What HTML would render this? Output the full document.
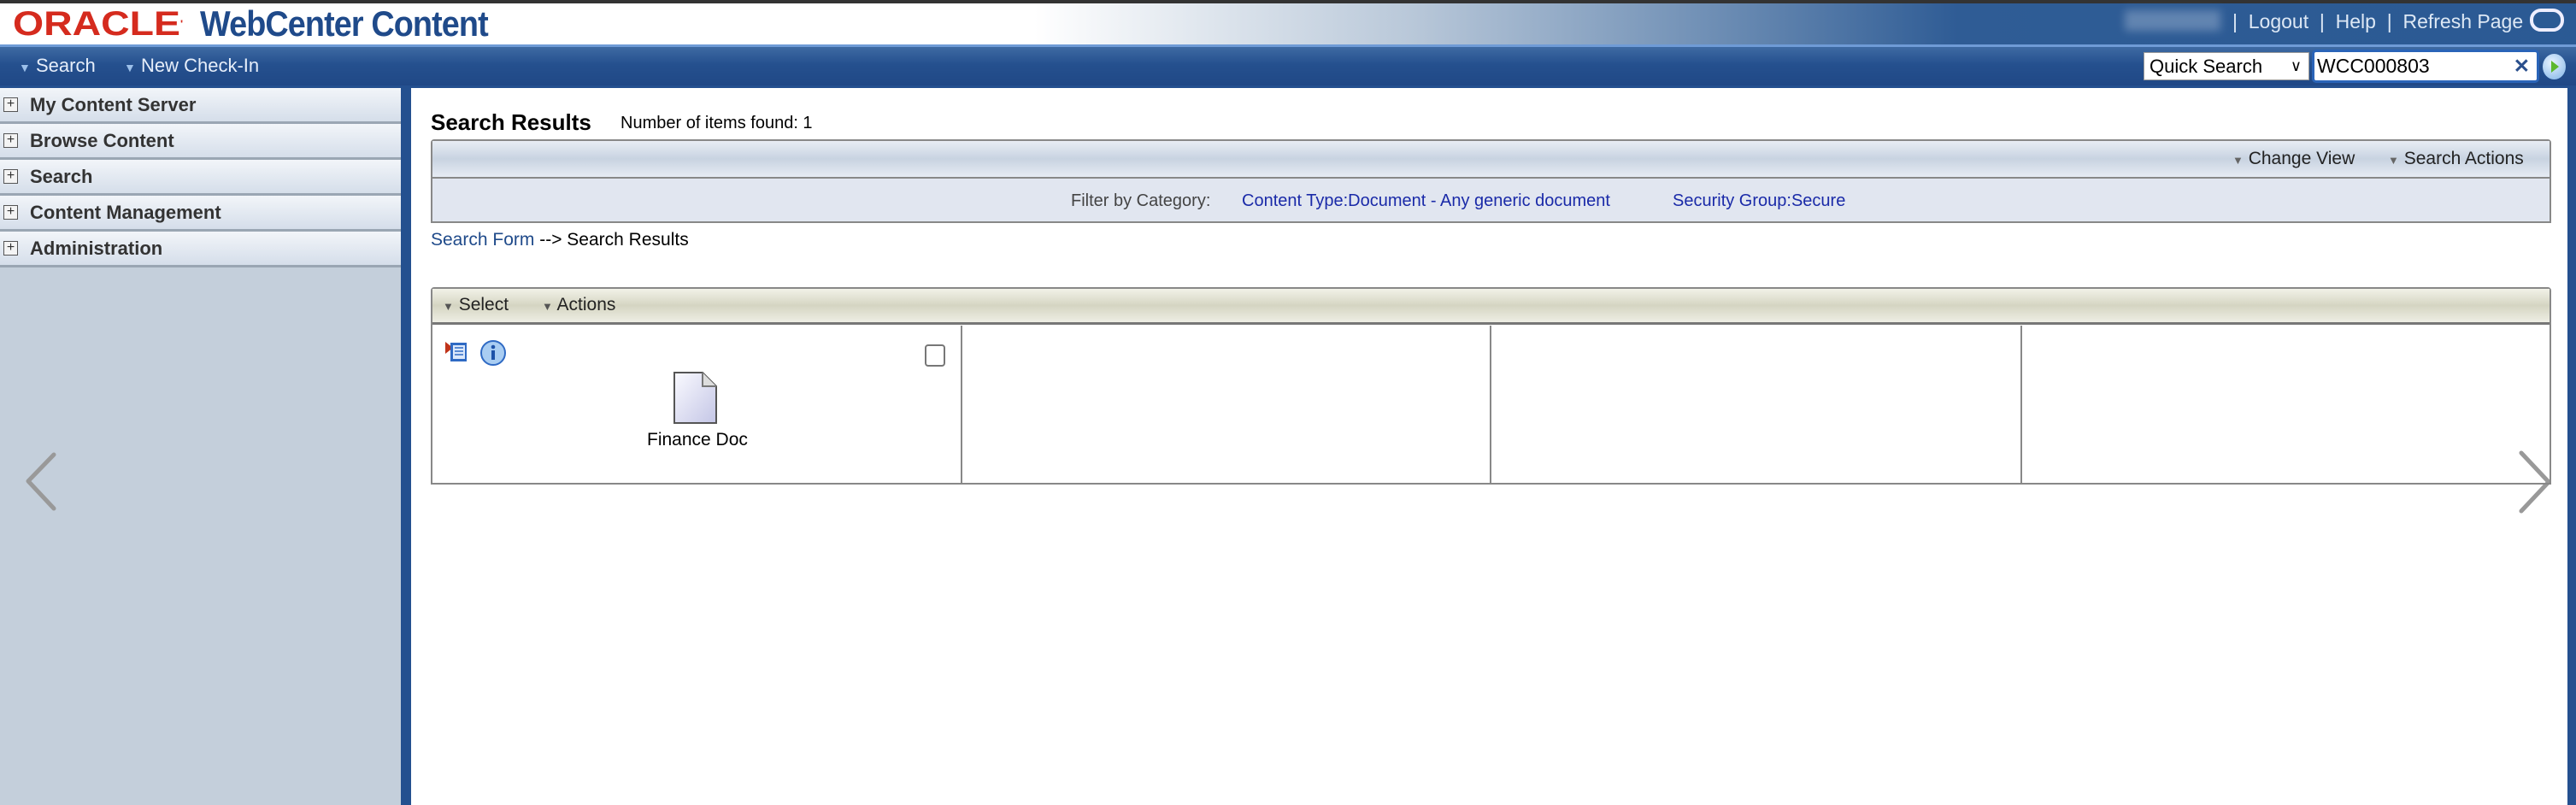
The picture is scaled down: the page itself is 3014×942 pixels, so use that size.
<!DOCTYPE html>
<html><head><meta charset="utf-8"><style>
*{margin:0;padding:0;box-sizing:border-box}
body{width:3014px;height:942px;position:relative;overflow:hidden;background:#fff;font-family:"Liberation Sans",sans-serif;}
.a{position:absolute;white-space:nowrap}
</style></head><body>
<!-- header -->
<div class="a" style="left:0;top:0;width:3014px;height:4px;background:#333"></div>
<div class="a" style="left:0;top:4px;width:3014px;height:48px;background:linear-gradient(90deg,#fff 0,#fff 1210px,#b9c8d9 1650px,#6f8fb5 2000px,#2f5c95 2290px,#2b5a94 3014px)"></div>
<div class="a" style="left:15px;top:4px;font-size:40px;color:#d52b1e;font-weight:bold;line-height:48px;transform:scaleX(1.16);transform-origin:left">ORACLE<span style="font-size:12px;vertical-align:top">'</span></div>
<div class="a" style="left:234px;top:3px;font-size:42px;color:#1f4a8a;font-weight:bold;line-height:50px;letter-spacing:-1px;transform:scaleX(0.9);transform-origin:left">WebCenter Content</div>
<div class="a" style="left:2486px;top:12px;width:112px;height:24px;background:#6f8fb8;filter:blur(5px);opacity:.8"></div>
<div class="a" style="left:2612px;top:11px;font-size:23px;color:#dde8f5;line-height:28px">|&nbsp; Logout &nbsp;|&nbsp; Help &nbsp;|&nbsp; Refresh Page</div>
<div class="a" style="left:2960px;top:10px;width:40px;height:27px;border:4px solid #eef;border-radius:13px"></div>
<div class="a" style="left:0;top:52px;width:3014px;height:3px;background:#6f9bd6"></div>
<!-- nav -->
<div class="a" style="left:0;top:55px;width:3014px;height:45px;background:linear-gradient(#3e6aa3,#25508e 45%,#204886)"></div>
<div class="a" style="left:22px;top:63px;font-size:22px;color:#e6eefa;line-height:28px"><span style="font-size:14px;color:#9cc0ea">&#9660;</span> Search</div>
<div class="a" style="left:145px;top:63px;font-size:22px;color:#e6eefa;line-height:28px"><span style="font-size:14px;color:#9cc0ea">&#9660;</span> New Check-In</div>
<div class="a" style="left:2508px;top:61px;width:194px;height:33px;background:#fff;border:1px solid #999;font-size:22px;line-height:31px;padding-left:6px;color:#000">Quick Search<span style="position:absolute;right:8px;top:0;font-size:18px">&#8744;</span></div>
<div class="a" style="left:2705px;top:58px;width:266px;height:39px;background:#fff;border:3px solid #2a64b8;border-radius:5px;font-size:23px;line-height:33px;padding-left:3px;color:#000">WCC000803<span style="position:absolute;right:8px;top:0;color:#2a4f8c;font-weight:bold">&#10005;</span></div>
<div class="a" style="left:2975px;top:63px;width:27px;height:30px;border-radius:50%;background:radial-gradient(circle at 40% 35%,#e8f3ff,#7fb3e6)"></div>
<div class="a" style="left:2985px;top:71px;width:0;height:0;border-left:9px solid #5cb82e;border-top:7px solid transparent;border-bottom:7px solid transparent"></div>
<!-- sidebar -->
<div class="a" style="left:0;top:100px;width:469px;height:842px;background:#c4cfdb"></div>
<div class="a" style="left:469px;top:100px;width:12px;height:842px;background:#24508f"></div>
<div class="a" style="left:3004px;top:100px;width:10px;height:842px;background:#24508f"></div>
<div class="a" style="left:0;top:100px;width:3014px;height:3px;background:#24508f"></div>
<div class="a" style="left:0;top:103px;width:469px;height:210px">
  <div style="height:42px;border-bottom:3px solid #9aa6b3;background:linear-gradient(#f2f5f9,#d5deea);position:relative"><span class="a" style="left:4px;top:11px;width:17px;height:17px;border:1px solid #555;font-size:16px;line-height:14px;text-align:center;color:#333;background:#f4f4f4">+</span><span class="a" style="left:35px;top:7px;font-size:22px;font-weight:bold;color:#333">My Content Server</span></div>
  <div style="height:42px;border-bottom:3px solid #9aa6b3;background:linear-gradient(#f2f5f9,#d5deea);position:relative"><span class="a" style="left:4px;top:11px;width:17px;height:17px;border:1px solid #555;font-size:16px;line-height:14px;text-align:center;color:#333;background:#f4f4f4">+</span><span class="a" style="left:35px;top:7px;font-size:22px;font-weight:bold;color:#333">Browse Content</span></div>
  <div style="height:42px;border-bottom:3px solid #9aa6b3;background:linear-gradient(#f2f5f9,#d5deea);position:relative"><span class="a" style="left:4px;top:11px;width:17px;height:17px;border:1px solid #555;font-size:16px;line-height:14px;text-align:center;color:#333;background:#f4f4f4">+</span><span class="a" style="left:35px;top:7px;font-size:22px;font-weight:bold;color:#333">Search</span></div>
  <div style="height:42px;border-bottom:3px solid #9aa6b3;background:linear-gradient(#f2f5f9,#d5deea);position:relative"><span class="a" style="left:4px;top:11px;width:17px;height:17px;border:1px solid #555;font-size:16px;line-height:14px;text-align:center;color:#333;background:#f4f4f4">+</span><span class="a" style="left:35px;top:7px;font-size:22px;font-weight:bold;color:#333">Content Management</span></div>
  <div style="height:42px;border-bottom:3px solid #9aa6b3;background:linear-gradient(#f2f5f9,#d5deea);position:relative"><span class="a" style="left:4px;top:11px;width:17px;height:17px;border:1px solid #555;font-size:16px;line-height:14px;text-align:center;color:#333;background:#f4f4f4">+</span><span class="a" style="left:35px;top:7px;font-size:22px;font-weight:bold;color:#333">Administration</span></div>
</div>
<svg class="a" style="left:0;top:500px" width="120" height="140"><polyline points="63,32 33,63 63,95" fill="none" stroke="#999" stroke-width="5" stroke-linecap="round" stroke-linejoin="round"/></svg>
<svg class="a" style="left:2920px;top:500px" width="80" height="140"><polyline points="30,30 62,64 30,98" fill="none" stroke="#999" stroke-width="5" stroke-linecap="round" stroke-linejoin="round"/></svg>
<!-- content -->
<div class="a" style="left:504px;top:128px;font-size:26px;font-weight:bold;color:#000">Search Results</div>
<div class="a" style="left:726px;top:133px;font-size:20px;color:#000">Number of items found: 1</div>
<div class="a" style="left:504px;top:163px;width:2481px;height:98px;border:2px solid #888;border-radius:4px 4px 0 0;background:#e1e6f0"></div>
<div class="a" style="left:506px;top:165px;width:2477px;height:44px;background:linear-gradient(#e8edf4,#c8d3e1 50%,#e6ebf3);border-bottom:2px solid #888"></div>
<div class="a" style="left:2612px;top:174px;font-size:21px;color:#222"><span style="font-size:13px;color:#666">&#9660;</span> Change View</div>
<div class="a" style="left:2794px;top:174px;font-size:21px;color:#222"><span style="font-size:13px;color:#666">&#9660;</span> Search Actions</div>
<div class="a" style="left:1253px;top:224px;font-size:20px;color:#444">Filter by Category:</div>
<div class="a" style="left:1453px;top:224px;font-size:20px;color:#1a2aa8">Content Type:Document - Any generic document</div>
<div class="a" style="left:1957px;top:224px;font-size:20px;color:#1a2aa8">Security Group:Secure</div>
<div class="a" style="left:504px;top:269px;font-size:21px;color:#000"><span style="color:#1f4a8a">Search Form</span> --&gt; Search Results</div>
<div class="a" style="left:504px;top:336px;width:2481px;height:231px;border:2px solid #888;border-radius:4px 4px 0 0"></div>
<div class="a" style="left:506px;top:338px;width:2477px;height:42px;background:linear-gradient(#f2f2e8,#d5d5c2 50%,#eeeee4);border-bottom:3px solid #777"></div>
<div class="a" style="left:518px;top:345px;font-size:21px;color:#222"><span style="font-size:13px;color:#555">&#9660;</span> Select</div>
<div class="a" style="left:634px;top:345px;font-size:21px;color:#222"><span style="font-size:13px;color:#555">&#9660;</span> Actions</div>
<div class="a" style="left:1124px;top:381px;width:2px;height:186px;background:#888"></div>
<div class="a" style="left:1743px;top:381px;width:2px;height:186px;background:#888"></div>
<div class="a" style="left:2364px;top:381px;width:2px;height:186px;background:#888"></div>
<svg class="a" style="left:518px;top:396px" width="80" height="34">
<polygon points="3,4 12,11 3,18" fill="#c0341a"/>
<rect x="9" y="5" width="19" height="22" fill="#2f6ac4"/><rect x="12" y="8" width="14" height="16" fill="#dbe8fb"/>
<line x1="14" y1="11" x2="24" y2="11" stroke="#2f6ac4" stroke-width="1.5"/><line x1="14" y1="15" x2="24" y2="15" stroke="#2f6ac4" stroke-width="1.5"/><line x1="14" y1="19" x2="24" y2="19" stroke="#2f6ac4" stroke-width="1.5"/>
<circle cx="59" cy="17" r="14" fill="#a9cdf2" stroke="#2f6ac4" stroke-width="2"/>
<circle cx="59" cy="10" r="2.3" fill="#1d52a8"/><rect x="57" y="14" width="4" height="11" fill="#1d52a8"/>
</svg>
<div class="a" style="left:1082px;top:403px;width:24px;height:26px;border:2px solid #777;border-radius:4px;background:#fff"></div>
<svg class="a" style="left:786px;top:434px" width="56" height="64"><path d="M3 2 H36 L52 18 V61 H3 Z" fill="url(#g)" stroke="#555" stroke-width="2"/><path d="M36 2 V18 H52" fill="#ddd" stroke="#777" stroke-width="2"/><defs><linearGradient id="g" x1="0" y1="0" x2="1" y2="1"><stop offset="0" stop-color="#fafaff"/><stop offset="1" stop-color="#c4c6e6"/></linearGradient></defs></svg>
<div class="a" style="left:757px;top:503px;font-size:21px;color:#000">Finance Doc</div>
</body></html>
